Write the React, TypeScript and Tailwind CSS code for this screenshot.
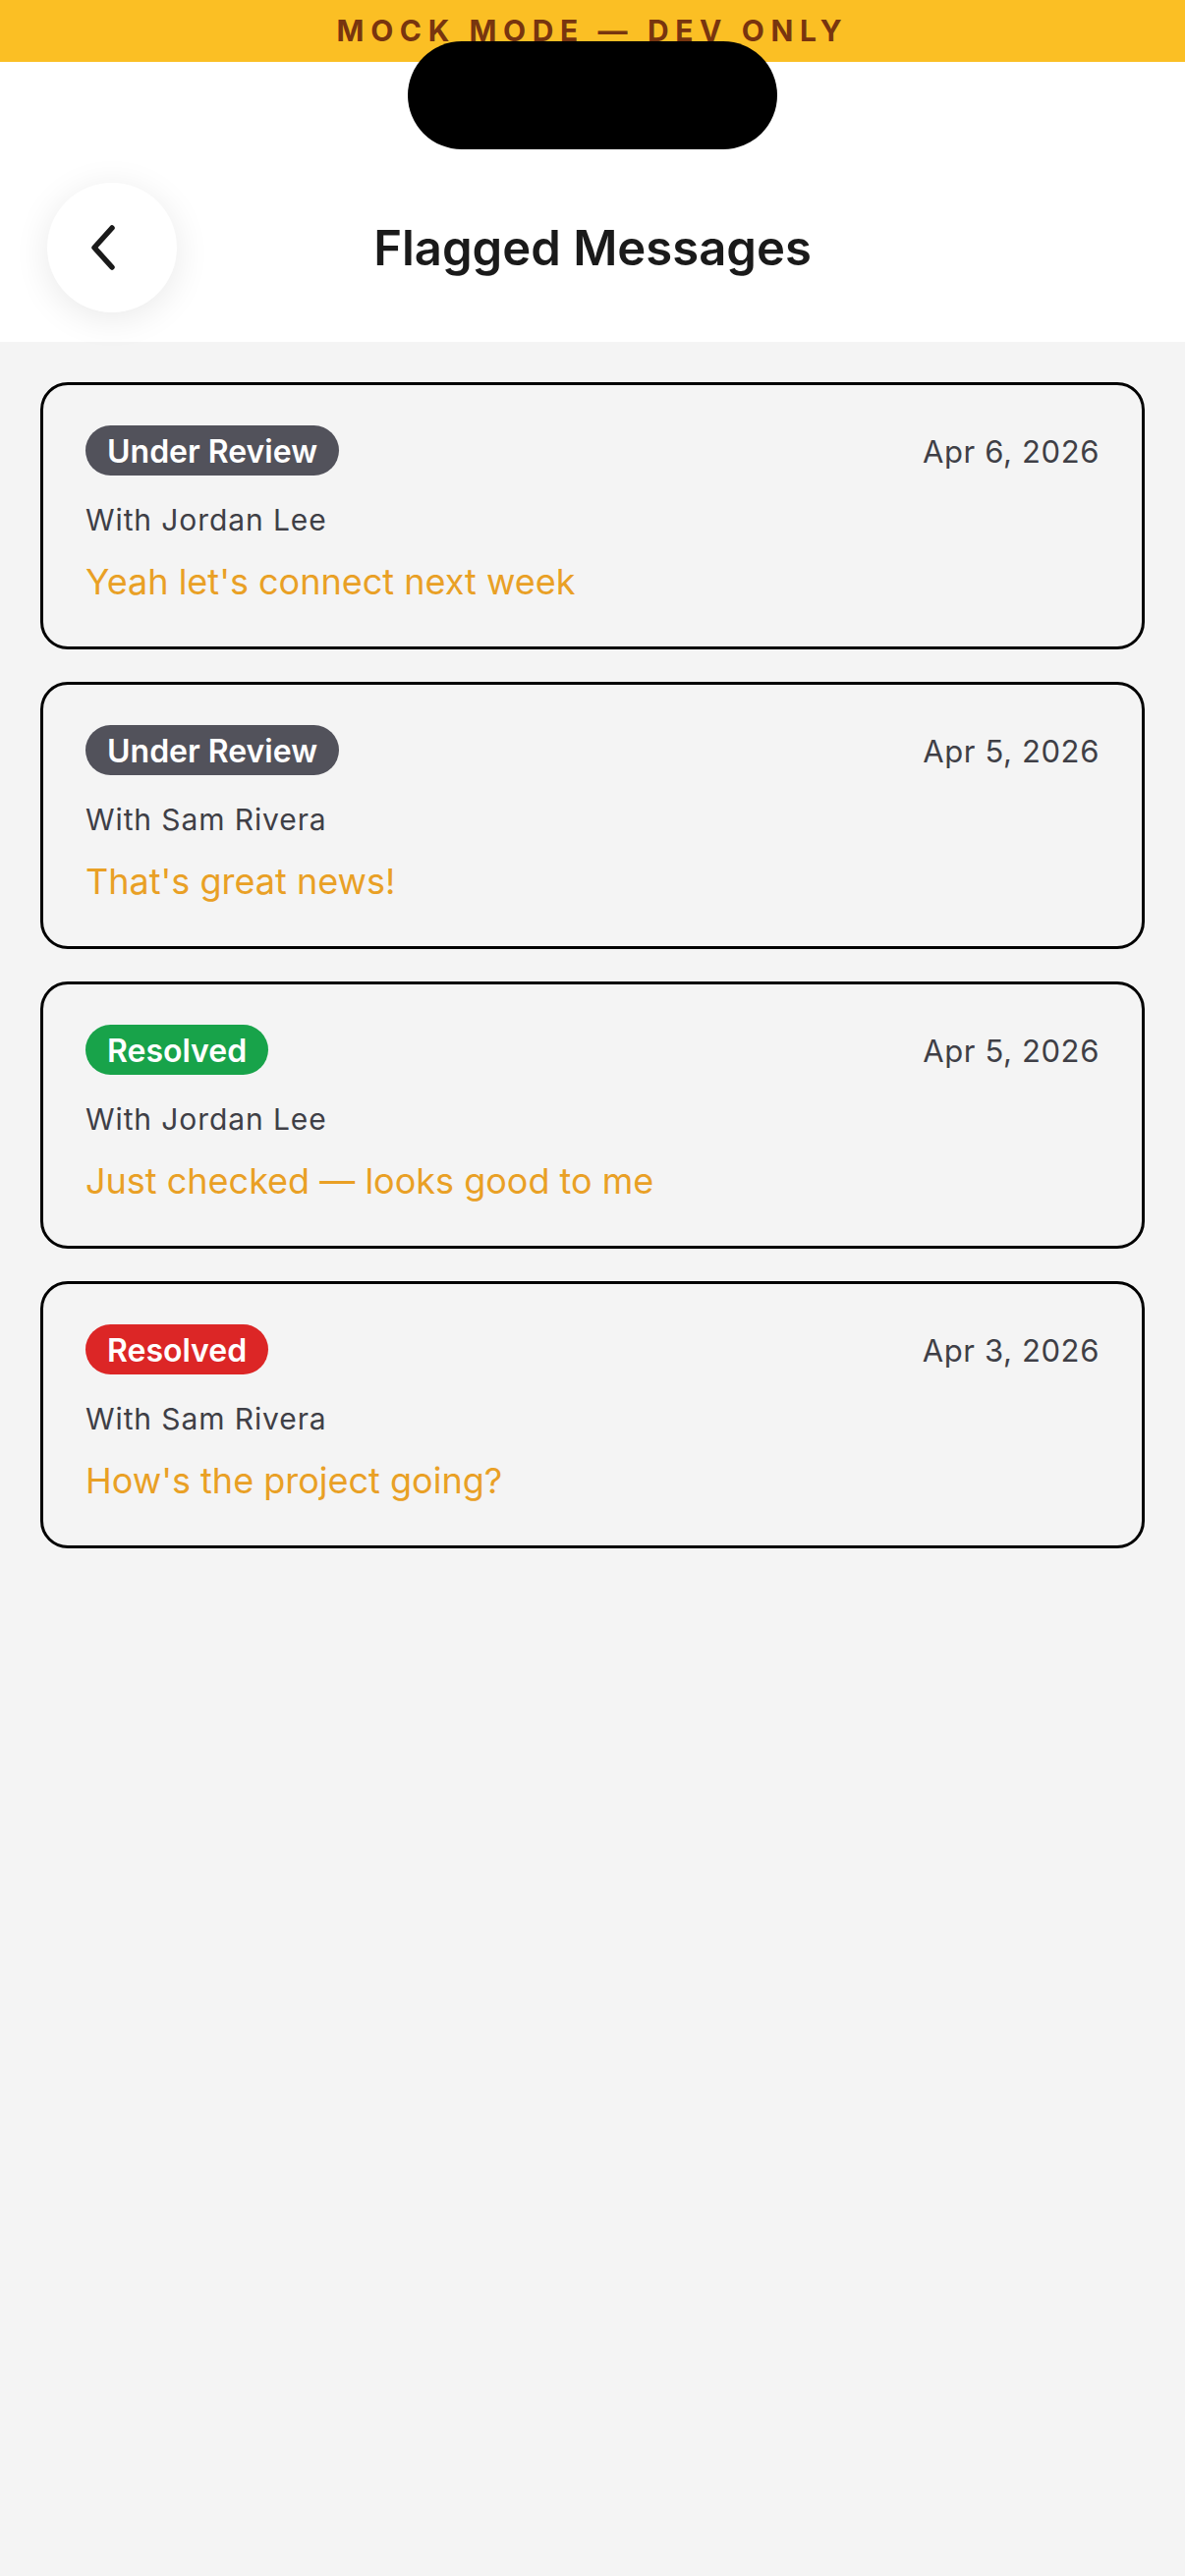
import React from "react";

type Flag = {
  id: string;
  status: "review" | "resolved-ok" | "resolved-bad";
  date: string;
  withName: string;
  message: string;
};

const FLAGS: Flag[] = [
  { id: "f1", status: "review", date: "Apr 6, 2026", withName: "Jordan Lee", message: "Yeah let's connect next week" },
  { id: "f2", status: "review", date: "Apr 5, 2026", withName: "Sam Rivera", message: "That's great news!" },
  { id: "f3", status: "resolved-ok", date: "Apr 5, 2026", withName: "Jordan Lee", message: "Just checked — looks good to me" },
  { id: "f4", status: "resolved-bad", date: "Apr 3, 2026", withName: "Sam Rivera", message: "How's the project going?" },
];

function StatusBadge({ status }: { status: Flag["status"] }) {
  const label = status === "review" ? "Under Review" : "Resolved";
  const tone =
    status === "review" ? "bg-[#52525b]" : status === "resolved-ok" ? "bg-[#18a34a]" : "bg-[#dc2626]";
  return (
    <span
      className={`${tone} inline-flex h-[51px] items-center rounded-full px-[22px] pt-[2px] text-[32px] font-semibold leading-none text-white`}
    >
      {label}
    </span>
  );
}

function FlagCard({ flag }: { flag: Flag }) {
  return (
    <div className="h-[272px] rounded-[28px] border-[3px] border-black bg-[#f4f4f4] px-[43px] pt-[41px]">
      <div className="flex items-center justify-between">
        <StatusBadge status={flag.status} />
        <span className="pt-[2px] text-[31px] leading-none tracking-[0.02em] text-[#3f3f46]">{flag.date}</span>
      </div>
      <p className="mt-[27px] text-[30px] leading-[36px] tracking-[0.03em] text-[#3f3f46]">With {flag.withName}</p>
      <p className="mt-[23px] text-[36px] leading-[44px] text-[#e9a025]">{flag.message}</p>
    </div>
  );
}

export default function App() {
  return (
    <div className="relative min-h-screen bg-[#f4f4f4] font-['Inter','Noto_Sans',sans-serif]">
      {/* dev banner */}
      <div className="flex h-[63px] items-center justify-center bg-[#fbbf24]">
        <span className="text-[30px] font-bold tracking-[0.22em] text-[#78350f]">MOCK MODE — DEV ONLY</span>
      </div>

      {/* device island */}
      <div className="absolute left-[415px] top-[42px] h-[110px] w-[376px] rounded-full bg-black" />

      <header className="bg-white px-[48px] pb-[30px] pt-[122px]">
        <div className="relative flex h-[133px] items-center">
          <button className="flex h-[132px] w-[132px] items-center justify-center rounded-full bg-white shadow-[0_6px_36px_rgba(0,0,0,0.09)]">
            <svg width="40" height="56" viewBox="0 0 40 56" fill="none" className="-ml-[12px]">
              <path
                d="M26 8 L8 28 L26 48"
                stroke="#1a1a1a"
                strokeWidth="5.5"
                strokeLinecap="round"
                strokeLinejoin="round"
              />
            </svg>
          </button>
          <h1 className="pointer-events-none absolute inset-x-0 pt-[2px] text-center text-[49px] font-semibold text-[#1a1a1a]">
            Flagged Messages
          </h1>
        </div>
      </header>

      <main className="flex flex-col gap-[33px] px-[41px] pt-[41px]">
        {FLAGS.map((f) => (
          <FlagCard key={f.id} flag={f} />
        ))}
      </main>
    </div>
  );
}
